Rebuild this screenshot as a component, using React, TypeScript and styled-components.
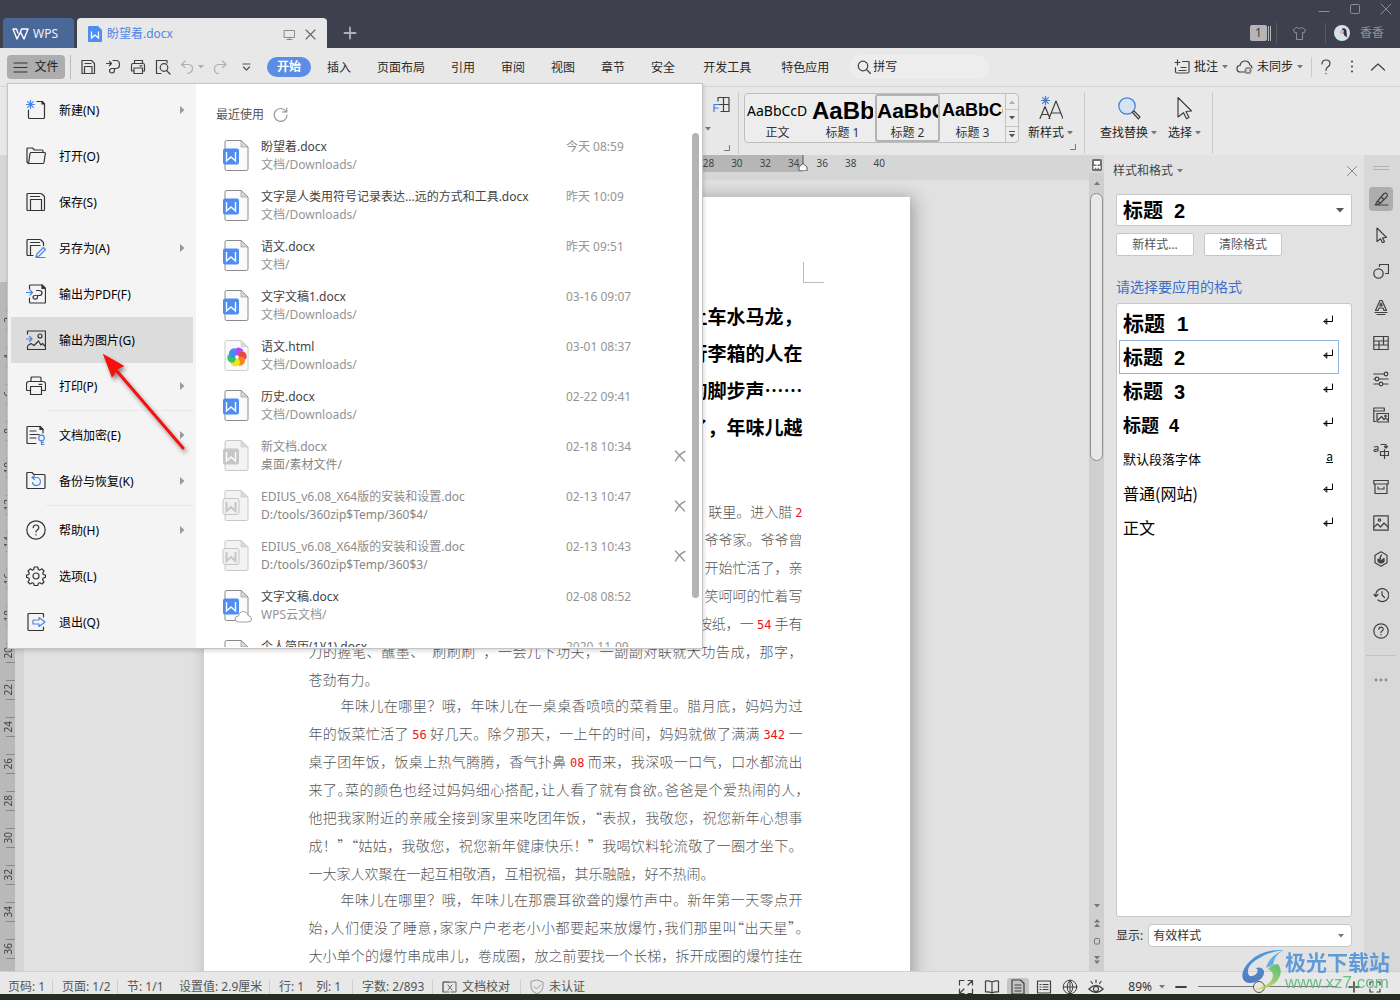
import React from 'react';
import styled, { createGlobalStyle, css } from 'styled-components';

const UI = '"Noto Sans", "Noto Sans CJK SC", sans-serif';
const CJK = '"Noto Sans CJK SC", "Noto Sans", sans-serif';
const HEADING = '"Liberation Sans", "Noto Sans CJK SC", sans-serif';

const Global = createGlobalStyle`
  * { box-sizing: border-box; }
  body { margin: 0; background: #262d22; font-family: ${UI}; font-size: 12px; line-height: 16px; color: #333; }
  button, select, input { font: inherit; color: inherit; }
  button { border: 0; padding: 0; margin: 0; background: none; cursor: pointer; }
  ul { list-style: none; margin: 0; padding: 0; }
  p, h2 { margin: 0; font-weight: inherit; font-size: inherit; }
  svg { display: block; flex: none; }
`;

/* ---------- icons ---------- */

interface IconProps {
  w?: number;
  h?: number;
  box?: string;
  color?: string;
  sw?: number;
  children: React.ReactNode;
}

const Icon = ({ w = 20, h = w, box = `0 0 ${w} ${h}`, color = '#404040', sw = 1.2, children }: IconProps) => (
  <svg width={w} height={h} viewBox={box} fill="none" stroke={color} strokeWidth={sw} strokeLinecap="round" strokeLinejoin="round" aria-hidden="true">
    {children}
  </svg>
);

const Caret = ({ color = '#777' }: { color?: string }) => (
  <svg width="6" height="4" viewBox="0 0 6 4" aria-hidden="true"><path d="M0 0h6L3 3.5z" fill={color} /></svg>
);

const BLUE = '#4a86e0';

const menuIcons: Record<string, React.ReactNode> = {
  new: <><path d="M2.500 10v7.500q0 1 1 1h14q1 0 1-1V4L16 1.500h-5" /><path d="M16 1.500V4h2.500z" fill="#333" /><path d="M4.500.5v8M.5 4.500h8M1.700 1.700l5.600 5.600M7.300 1.700L1.700 7.300" stroke={BLUE} sw={1} /></>,
  open: <><path d="M2.500 17.500L1 16V3q0-1 1-1h4.500l2 2H16q1 0 1 1v1" /><path d="M5 6.500h13.500q1 0 .8 1L18 16.500q-.2 1-1 1H3.500q-.9 0-.8-1l1.300-9q.2-1 1-1z" /></>,
  save: <><path d="M1 17.500v-15q0-1 1-1h12.500q1 0 1.500.5l2 2q.5.500.5 1.500v12q0 1-1 1H2q-1 0-1-1z" /><path d="M4.500 18V7.500h11V18M4.500 4.500h9" /></>,
  saveAs: <><path d="M7 17.500H2q-1 0-1-1v-14q0-1 1-1h11.500q1 0 1.500.5l2 2q.5.500.5 1.500v2" /><path d="M4.500 17V7.500H14M4.500 4.500h9" /><path d="M11 16l6.500-6.500 2 2L13 18l-3 .8zM10 19.500h9" stroke={BLUE} /></>,
  pdf: <><path d="M3.500 5V2q0-1 1-1H16l3.500 3.500V18q0 1-1 1h-14q-1 0-1-1v-4" /><path d="M16 1v3.500h3.500z" fill="#333" /><path d="M10.500 6.500H13q3 0 3 2.500t-3 2.500h-1.500V13q0 2.200-2.200 2.200T7 13.300q0-1.800 2.300-1.800h1" /><path d="M.5 8.500h6M4 6l2.500 2.500L4 11" stroke={BLUE} /></>,
  image: <><path d="M1.500 4V1h18v18.500H1.500v-3" /><circle cx="14" cy="6" r="2" /><path d="M2 15.500l3-2 3 2 4.500-4.500L15 15l1.500-1.500 3 3" /><path d="M.5 9h5.500M3.500 6.500L6 9l-2.500 2.500" stroke={BLUE} /></>,
  print: <><path d="M5 5.500V2q0-1 1-1h8q1 0 1 1v3.500M4 14.500H1.500q-1 0-1-1V8q0-2.500 2.500-2.500h14q2.500 0 2.500 2.500v5.500q0 1-1 1H16" /><path d="M4.500 10.500h11v8h-11zM13 8.300h3" /></>,
  encrypt: <><path d="M10 18.500H2q-1 0-1-1v-15q0-1 1-1h12L17 4.500V8" /><path d="M14 1.500v3h3z" fill="#333" /><path d="M4 6h6M4 9.500h9M4 13h6" /><circle cx="15.500" cy="13" r="2.800" stroke={BLUE} /><path d="M15.500 16v4M15.500 19.500H18M15.500 17.500h2" stroke={BLUE} /></>,
  backup: <><path d="M.8 16.500V2.500q0-1 1-1H6l2 2h10q1 0 1 1v12q0 1-1 1H1.800q-1 0-1-1z" /><path d="M8.500 4.500l-2.500 2 2.500 2M6.500 6.500h4a4 4 0 1 1-4 5" stroke={BLUE} /></>,
  help: <><circle cx="10" cy="10" r="9.200" /><path d="M7.200 7.700q.2-2.700 2.800-2.700t2.800 2.500q0 1.500-1.500 2.400T10 12M10 14.600v.4" /></>,
  options: <><path d="M8.300 1h3.400l.6 2.500 1.500.6L16 2.800 18 5l-1.300 2.100.5 1.400 2.300.6v2.300l-2.300.6-.6 1.500L18 16l-2.200 2-2-1.200-1.500.5-.6 2.200H8.300l-.6-2.200-1.500-.5-2 1.200L2 16l1.400-2.500-.6-1.500-2.300-.6V9.100l2.300-.6.5-1.400L2 5l2.200-2.200 2 1.300 1.500-.6z" /><circle cx="10" cy="10" r="3" /></>,
  exit: <><path d="M17.500 5V2.500q0-1-1-1H3q-1 0-1 1v15q0 1 1 1h13.500q1 0 1-1V15" /><path d="M7 8h6V5.500L19 10l-6 4.500V12H7z" stroke={BLUE} /></>,
};

const sideIcons: { name: string; art: React.ReactNode }[] = [
  { name: '样式和格式', art: <><path d="M2 14h13M3.500 11.500L11 2.500q2-1 3 .5t-.2 2.800L7 12.500l-4.500 1.300zM8 5.800l3 2.900M5 10l2 2" /></> },
  { name: '选择', art: <path d="M4 1l9.500 9.500-4 .3 2 4-2 1-2-4L4 14.500z" /> },
  { name: '形状', art: <><circle cx="5.500" cy="10.500" r="4.700" /><path d="M6.500 3.500V1.500h9v9H12.500" /></> },
  { name: '艺术字', art: <><path d="M2.500 11.500L7 1.500h2l4.500 10h-2.500l-1-2.500H6l-1 2.500zM6.800 6.800L8 4l1.200 2.800zM2 13.500h12M4 15.700h8" /></> },
  { name: '表格', art: <path d="M.8 1.500h14.400v13H.8zM.8 6h14.400M.8 10h14.400M6 6v8.500M10.500 1.500V10" /> },
  { name: '设置', art: <><path d="M.8 3h10M.8 8h1.500M6 8h9.200M.8 13h5.500M10 13h5" /><circle cx="13" cy="3" r="1.800" /><circle cx="4" cy="8" r="1.800" /><circle cx="8" cy="13" r="1.800" /></> },
  { name: '图库', art: <><path d="M3 14.500H.8V1h10.500v3M.8 4h10M4 14V6.500h11.500v8.500H4.500" /><path d="M5 13l3.500-3.500 2.500 3 1.500-1.500 2.500 2" /><circle cx="12.500" cy="9" r=".7" /></> },
  { name: '翻译', art: <><path d="M1.500 4q2.500-1 3.500 0v4M5 6Q1 6 1 7.500T5 8M8 1.500h5V5M11.500 3.500L13 5l1.500-1.500M7.500 8.500h8v4h-8zM11.500 6.500v9" /></> },
  { name: '归档', art: <path d="M.8 1.500h14.400V5H.8zM2 5v9.500h12V5M5 8v2h6V8" /> },
  { name: '图片', art: <><path d="M.8.8h14.400v14.400H.8z" /><circle cx="6.500" cy="5" r="1.200" /><path d="M1 12l3.500-3 3 3 3.500-4 4 4" /></> },
  { name: '限制', art: <><path d="M8 .8l6 3.400v7.600l-6 3.400-6-3.400V4.200z" /><path d="M8.500 4Q6 7 7.500 9.500M8 12q-3.500 0-3-4 2 1 3 4 .5-3.500 3-4.500.8 4.500-3 4.500z" fill="#404040" /></> },
  { name: '历史', art: <><path d="M2.800 9A6.500 6.500 0 1 1 5 13M1 7.500L2.800 9.500 5 7.500M9 4.500V8l2.500 2.500" /></> },
  { name: '帮助', art: <><circle cx="8" cy="8" r="7.200" /><path d="M5.800 6.300q.2-2.200 2.200-2.200t2.200 1.900q0 1.200-1.200 1.900T8 9.700M8 11.700v.2" /></> },
];

/* ---------- frame ---------- */

const Frame = styled.div`
  position: relative;
  height: 100vh;
  display: flex;
  flex-direction: column;
  overflow: hidden;
`;

const Divider = styled.span<{ $h?: number; $c?: string }>`
  width: 1px;
  height: ${p => p.$h ?? 20}px;
  background: ${p => p.$c ?? '#cacaca'};
  flex: none;
`;

/* ---------- title bar ---------- */

const TitleBar = styled.header`
  height: 48px;
  flex: none;
  background: #3e414d;
  display: flex;
  align-items: flex-end;
  padding-left: 3px;
  gap: 3px;
`;

const WpsTab = styled.button`
  width: 71px;
  height: 30px;
  border-radius: 4px 4px 0 0;
  background: #4a6799;
  color: #f0f2f6;
  display: flex;
  align-items: center;
  gap: 4px;
  padding: 2px 0 0 9px;
`;

const DocTab = styled.div`
  width: 250px;
  height: 30px;
  border-radius: 4px 4px 0 0;
  background: #e8e8e8;
  color: #4f86e4;
  display: flex;
  align-items: center;
  padding: 2px 10px 0 11px;
  gap: 5px;
`;

const TabName = styled.span`
  flex: 1;
`;

const TabTools = styled.span`
  display: flex;
  gap: 8px;
`;

const AddTab = styled.button`
  height: 30px;
  padding: 0 13px;
`;

const TitleRight = styled.div`
  margin-left: auto;
  align-self: stretch;
  display: flex;
  flex-direction: column;
  align-items: flex-end;
  justify-content: space-between;
  padding: 3px 8px 5px 0;
`;

const WinButtons = styled.div`
  display: flex;
  gap: 19px;
`;

const UserRow = styled.div`
  display: flex;
  align-items: center;
  color: #90929b;
  height: 20px;
  padding-right: 8px;
`;

const Badge = styled.span`
  width: 17px;
  height: 16px;
  border-radius: 2px;
  background: #b4b4b9;
  color: #4a4034;
  text-align: center;
`;

const BadgeLines = styled.span`
  width: 5px;
  height: 15px;
  margin-right: 4px;
  border-left: 1px solid #3e414d;
  background: repeating-linear-gradient(to right, #b4b4b9 0 1px, #3e414d 1px 2px);
`;

const Shirt = styled.button`
  padding: 0 18px 0 15px;
`;

const Avatar = styled.span`
  margin: 0 10px 0 8px;
`;

/* ---------- menu bar ---------- */

const MenuBar = styled.nav`
  height: 38px;
  flex: none;
  background: #e8e8e8;
  display: flex;
  align-items: center;
  padding: 0 14px 0 7px;
`;

const FileButton = styled.button`
  width: 58px;
  height: 24px;
  border-radius: 4px;
  background: #adadad;
  color: #222;
  display: flex;
  align-items: center;
  justify-content: center;
  gap: 6px;
  margin-right: 5px;
`;

const QuickTools = styled.div`
  display: flex;
  align-items: center;
  gap: 9px;
  padding: 0 11px 0 9px;
`;

const ToolButton = styled.button`
  display: flex;
  align-items: center;
  gap: 4px;
`;

const Tab = styled.button<{ $active?: boolean; $wide?: boolean }>`
  height: 20px;
  padding: 2px ${p => (p.$wide ? 15 : 13)}px 0;
  color: #2a2a2a;
  white-space: nowrap;
  ${p => p.$active && css`
    padding: 0 10px;
    margin-right: 3px;
    border-radius: 10px;
    background: #5a8ee6;
    color: #fff;
    font-weight: 700;
  `}
`;

const SearchPill = styled.label`
  width: 140px;
  height: 24px;
  border-radius: 12px;
  background: #ededed;
  display: flex;
  align-items: center;
  gap: 2px;
  padding: 0 8px;
  margin-left: 5px;
`;

const SearchInput = styled.input`
  border: 0;
  outline: 0;
  background: none;
  padding: 0;
  width: 100%;
  color: #2a2a2a;
  &::placeholder { color: #2a2a2a; opacity: 1; }
`;

const MenuRight = styled.div`
  margin-left: auto;
  display: flex;
  align-items: center;
  color: #222;
  gap: 8px;
`;

/* ---------- ribbon ---------- */

const Ribbon = styled.section`
  height: 69px;
  flex: none;
  background: #e8e8e8;
  border-top: 1px solid #d4d4d4;
  display: flex;
  padding-left: 705px;
  padding-top: 5px;
`;

const RibbonGroup = styled.div`
  height: 62px;
  display: flex;
  border-right: 1px solid #cacaca;
`;

const BorderTools = styled.div`
  width: 33px;
  padding: 4px 8px 3px 0;
  display: flex;
  flex-direction: column;
  align-items: flex-end;
  justify-content: space-between;
`;

const CaretRow = styled.span`
  align-self: flex-start;
`;

const Gallery = styled.div`
  margin: 1px 9px 0 5px;
  height: 50px;
  border: 1px solid #bdbdbd;
  border-radius: 4px;
  background: #ededed;
  display: flex;
`;

const StyleCell = styled.button<{ $active?: boolean }>`
  width: 65px;
  height: 48px;
  border: 2px solid ${p => (p.$active ? '#b4b4b4' : 'transparent')};
  border-radius: 3px;
  overflow: hidden;
  display: flex;
  flex-direction: column;
  color: #333;
`;

const Sample = styled.span<{ $size: number; $bold?: boolean }>`
  height: 29px;
  line-height: 29px;
  width: 100%;
  flex: none;
  overflow: hidden;
  white-space: nowrap;
  text-align: left;
  color: #000;
  font-size: ${p => p.$size}px;
  ${p => p.$bold && css`font-family: ${HEADING}; font-weight: 700;`}
`;

const SampleName = styled.span`
  width: 100%;
  text-align: center;
`;

const GalleryScroll = styled.div`
  width: 13px;
  border-left: 1px solid #c4c4c4;
  display: flex;
  flex-direction: column;
`;

const GalleryStep = styled.button`
  flex: 1;
  display: flex;
  align-items: center;
  justify-content: center;
  & + & { border-top: 1px solid #c4c4c4; }
`;

const BigTool = styled.button`
  display: flex;
  flex-direction: column;
  align-items: center;
  gap: 4px;
  padding-top: 4px;
  color: #222;
  white-space: nowrap;
`;

const BigLabel = styled.span`
  display: flex;
  align-items: center;
  gap: 3px;
`;

const NewStyleGroup = styled.div`
  display: flex;
  width: 48px;
  margin-right: 8px;
  align-items: flex-start;
  justify-content: space-between;
`;

const EditTools = styled.div`
  display: flex;
  gap: 11px;
  padding: 0 11px 0 15px;
  align-items: flex-start;
`;

const LauncherSlot = styled.span`
  align-self: flex-end;
  display: flex;
  justify-content: flex-end;
  padding-bottom: 4px;
  width: 3px;
`;

const Launcher = () => <Icon w={6} h={6} color="#777" sw={1}><path d="M5.500.5v5h-5" /></Icon>;

/* ---------- work area ---------- */

const Work = styled.main`
  flex: 1;
  min-height: 0;
  display: flex;
  background: #e1e1e1;
`;

const VRuler = styled.div`
  width: 24px;
  flex: none;
  overflow: hidden;
  padding-top: 146px;
  background: linear-gradient(#d6d6d6 127px, transparent 127px), linear-gradient(to right, #b9b9b9 15px, #d5d5d5 15px);
`;

const VCell = styled.div`
  width: 16px;
  height: 37px;
  display: flex;
  align-items: center;
  justify-content: center;
  font-size: 10px;
  color: #444;
  background:
    linear-gradient(#888, #888) 6px 9px / 9px 1px no-repeat,
    linear-gradient(#888, #888) 6px 28px / 9px 1px no-repeat;
`;

const VNum = styled.span`
  writing-mode: vertical-rl;
  transform: rotate(180deg);
`;

const DocArea = styled.div`
  flex: 1;
  min-width: 0;
  display: flex;
  flex-direction: column;
`;

const HRuler = styled.div`
  height: 25px;
  flex: none;
  background: #d6d6d6;
  display: flex;
  justify-content: center;
  align-items: flex-start;
`;

const HRulerInner = styled.div`
  position: relative;
  width: 706px;
  height: 17px;
  padding-left: 92px;
  background: linear-gradient(to right, #d6d6d6 105px, #b6b6b6 105px, #b6b6b6 599px, #d6d6d6 599px);
`;

const HCells = styled.div`
  width: 598px;
  display: grid;
  grid-template-columns: repeat(21, 1fr);
  font-size: 10px;
  color: #444;
  text-align: center;
`;

const Indent = styled.span`
  position: absolute;
  left: 594px;
  top: 0;
`;

const Canvas = styled.div`
  flex: 1;
  min-height: 0;
  overflow: hidden;
  display: flex;
  justify-content: center;
  padding-top: 17px;
`;

const Page = styled.article`
  width: 706px;
  height: 1000px;
  flex: none;
  background: #fff;
  box-shadow: 4px 0 16px rgba(0, 0, 0, 0.28);
  font-family: ${CJK};
`;

const PageHead = styled.div`
  height: 86px;
  display: flex;
  align-items: flex-end;
  justify-content: flex-end;
  padding-right: 86px;
`;

const CropMark = styled.span`
  width: 21px;
  height: 21px;
  border-left: 1px solid #bcbcbc;
  border-bottom: 1px solid #bcbcbc;
`;

const Headline = styled.h2`
  padding: 14px 107px 52px 105px;
  font-size: 19px;
  line-height: 37px;
  font-weight: 700;
  color: #000;
  text-align: right;
`;

const BodyText = styled.div`
  padding: 0 107px 0 105px;
  font-size: 14px;
  line-height: 28px;
  font-weight: 300;
  color: #555;
`;

const Para = styled.p`
  margin-bottom: -2px;
`;

const Line = styled.span<{ $mode?: 'end' | 'start'; $indent?: boolean; $trim?: boolean }>`
  display: block;
  height: 28px;
  white-space: nowrap;
  text-align: ${p => (p.$mode === 'end' ? 'right' : 'left')};
  ${p => !p.$mode && css`text-align: justify; text-align-last: justify;`}
  ${p => p.$indent && css`padding-left: 32px;`}
  ${p => p.$trim && css`font-feature-settings: "halt";`}
`;

const Red = styled.span`
  font-family: "DejaVu Sans Mono", monospace;
  font-size: 12px;
  line-height: 14px;
  color: #f01018;
`;

const HeadLine = styled.span`
  display: block;
`;

/* ---------- scroll bar ---------- */

const Scroll = styled.div`
  width: 15px;
  flex: none;
  background: #cfcfcf;
  display: flex;
  flex-direction: column;
  align-items: center;
`;

const ScrollHead = styled.div`
  height: 18px;
  width: 100%;
  background: #d6d6d6;
  display: flex;
  justify-content: center;
  padding-top: 4px;
`;

const ScrollArrow = styled.button`
  height: 20px;
  display: flex;
  align-items: center;
`;

const Thumb = styled.div`
  width: 13px;
  height: 268px;
  border: 1px solid #8e8e8e;
  border-radius: 7px;
  background: #e8e8e8;
`;

const ScrollFoot = styled.div`
  margin-top: auto;
  display: flex;
  flex-direction: column;
  align-items: center;
  gap: 11px;
  padding-bottom: 7px;
`;

/* ---------- style panel ---------- */

const Panel = styled.aside`
  width: 260px;
  flex: none;
  background: #e3e3e3;
  padding: 8px 12px 24px 12px;
  display: flex;
  flex-direction: column;
`;

const PanelTitle = styled.div`
  height: 16px;
  display: flex;
  align-items: center;
  gap: 4px;
  margin: 0 0 15px -3px;
  color: #444;
`;

const CloseButton = styled.button`
  margin-left: auto;
  margin-right: -6px;
`;

const SelectWrap = styled.span<{ $h: number }>`
  position: relative;
  display: block;
  flex: 1 1 auto;
  height: ${p => p.$h}px;
  max-height: ${p => p.$h}px;
`;

const Select = styled.select<{ $title?: boolean }>`
  appearance: none;
  width: 100%;
  height: 100%;
  border: 1px solid #c6c6c6;
  border-radius: ${p => (p.$title ? 2 : 4)}px;
  background: #fff;
  color: #333;
  padding: 0 4px;
  ${p => p.$title && css`
    padding: 2px 6px 0;
    color: #000;
    font: 700 20px/28px ${HEADING};
  `}
`;

const SelectCaret = styled.span`
  position: absolute;
  right: 8px;
  top: calc(50% - 2px);
  pointer-events: none;
`;

const PanelButtons = styled.div`
  display: flex;
  gap: 10px;
  margin: 7px 0 22px;
`;

const PanelButton = styled.button`
  width: 78px;
  height: 23px;
  border: 1px solid #c6c6c6;
  border-radius: 2px;
  background: #fff;
  color: #555;
`;

const PanelHint = styled.div`
  font-size: 14px;
  line-height: 18px;
  color: #3c6fc9;
  margin-bottom: 7px;
`;

const StyleList = styled.ul`
  flex: 1;
  border: 1px solid #c6c6c6;
  border-radius: 3px;
  background: #fff;
  padding: 2px 12px 0 2px;
  margin-bottom: 7px;
`;

const StyleItem = styled.button<{ $size: number; $bold?: boolean; $active?: boolean }>`
  width: 100%;
  height: 34px;
  border: 1px solid ${p => (p.$active ? '#93b3de' : 'transparent')};
  padding: 0 5px 0 3px;
  display: flex;
  align-items: center;
  justify-content: space-between;
  color: #000;
  font-size: ${p => p.$size}px;
  line-height: 28px;
  font-family: ${CJK};
  ${p => p.$bold && css`padding-top: 2px; font-weight: 700; font-family: ${HEADING};`}
`;

const Mark = styled.span`
  align-self: flex-start;
  padding-top: 4px;
`;

const CharMark = styled.span`
  align-self: flex-start;
  padding-top: 6px;
  font-size: 12px;
  text-decoration: underline;
  line-height: 14px;
`;

const ShowRow = styled.div`
  display: flex;
  align-items: center;
  gap: 5px;
`;

/* ---------- side bar ---------- */

const Side = styled.aside`
  width: 36px;
  flex: none;
  background: #d8d8d8;
  display: flex;
  flex-direction: column;
  align-items: center;
  gap: 12px;
  padding-top: 11px;
  padding-right: 2px;
`;

const SideGrip = styled.span`
  width: 16px;
  height: 4px;
  margin-bottom: 5px;
  border: solid #b4b4b4;
  border-width: 1px 0;
`;

const SideButton = styled.button<{ $active?: boolean }>`
  width: 24px;
  height: 24px;
  border-radius: 4px;
  display: flex;
  align-items: center;
  justify-content: center;
  background: ${p => (p.$active ? '#adadad' : 'transparent')};
`;

const SideRule = styled.span`
  width: 30px;
  height: 1px;
  background: #c2c2c2;
`;

/* ---------- status bar ---------- */

const Status = styled.footer`
  height: 23px;
  flex: none;
  background: #e8e8e8;
  border-top: 1px solid #d0d0d0;
  display: flex;
  align-items: center;
  padding: 7px 14px 0 8px;
  color: #555;
  white-space: nowrap;
`;

const StatusItem = styled.span<{ $w: number; $line?: boolean }>`
  width: ${p => p.$w}px;
  height: 16px;
  display: flex;
  align-items: center;
  gap: 5px;
  border-right: ${p => (p.$line ? '1px solid #d0d0d0' : '0')};
  margin-right: ${p => (p.$line ? 9 : 0)}px;
`;

const StatusRight = styled.div`
  margin-left: auto;
  display: flex;
  align-items: center;
  gap: 4px;
`;

const ViewButton = styled.button<{ $active?: boolean }>`
  width: 22px;
  height: 18px;
  border-radius: 3px;
  display: flex;
  align-items: center;
  justify-content: center;
  background: ${p => (p.$active ? '#c4c4c4' : 'transparent')};
`;

const ZoomText = styled.button`
  display: flex;
  align-items: center;
  gap: 7px;
  color: #333;
  margin: 0 6px 0 17px;
`;

const ZoomRange = styled.input`
  appearance: none;
  width: 139px;
  height: 14px;
  margin: 0 7px;
  background: linear-gradient(#777, #777) center / 100% 1px no-repeat;
  &::-webkit-slider-thumb {
    appearance: none;
    width: 12px;
    height: 12px;
    border: 1px solid #555;
    border-radius: 50%;
    background: #e8e8e8;
  }
`;

const Taskbar = styled.div`
  height: 6px;
  flex: none;
  background: #262d22;
`;

/* ---------- file menu ---------- */

const FileMenu = styled.div`
  position: absolute;
  left: 7px;
  top: 83px;
  width: 696px;
  height: 566px;
  border: 1px solid #c4c4c4;
  background: #fff;
  box-shadow: 1px 2px 4px rgba(0, 0, 0, 0.15);
  display: flex;
`;

const Commands = styled.ul`
  width: 188px;
  flex: none;
  padding: 3px;
  background: #f4f4f4;
`;

const Command = styled.button<{ $active?: boolean }>`
  width: 182px;
  height: 46px;
  padding: 0 8px 0 15px;
  display: flex;
  align-items: center;
  gap: 13px;
  color: #000;
  background: ${p => (p.$active ? '#dcdcdc' : 'transparent')};
`;

const CommandName = styled.span`
  flex: 1;
  padding-top: 2px;
  text-align: left;
`;

const CommandRule = styled.li`
  height: 3px;
  margin-left: 35px;
  background: linear-gradient(#e8e8e8, #e8e8e8) 0 1px / 100% 1px no-repeat;
`;

const Recent = styled.section`
  flex: 1;
  display: flex;
  flex-direction: column;
  overflow: hidden;
`;

const RecentHead = styled.div`
  height: 47px;
  flex: none;
  padding: 14px 0 0 20px;
  display: flex;
  align-items: center;
  gap: 9px;
  color: #555;
`;

const RecentBody = styled.div`
  flex: 1;
  min-height: 0;
  display: flex;
  padding: 0 3px 1px 26px;
`;

const RecentList = styled.ul`
  flex: 1;
  overflow: hidden;
`;

const RecentRow = styled.li`
  height: 50px;
  display: grid;
  grid-template-columns: 39px 305px 108px 1fr;
  align-items: center;
`;

const FileText = styled.a<{ $gone?: boolean }>`
  display: block;
  text-decoration: none;
  line-height: 18px;
  padding-bottom: 1px;
  white-space: nowrap;
  color: ${p => (p.$gone ? '#8c8c8c' : '#444')};
`;

const FilePath = styled.span<{ $gone?: boolean }>`
  display: block;
  color: ${p => (p.$gone ? '#868686' : '#959595')};
`;

const FileTime = styled.time`
  color: #959595;
  line-height: 18px;
  padding-bottom: 19px;
  white-space: nowrap;
`;

const RecentThumb = styled.div`
  width: 7px;
  height: 465px;
  margin-top: 2px;
  border-radius: 4px;
  background: #b4b4b6;
`;

/* ---------- overlays ---------- */

const Pointer = styled.svg`
  position: absolute;
  left: 96px;
  top: 346px;
  filter: drop-shadow(2px 3px 2px rgba(0, 0, 0, 0.45));
  pointer-events: none;
`;

const Watermark = styled.div`
  position: absolute;
  right: 10px;
  bottom: 7px;
  display: flex;
  opacity: 0.85;
  pointer-events: none;
`;

const MarkText = styled.div`
  font-family: ${CJK};
  font-weight: 700;
  color: #4b8fd6;
  font-size: 21px;
  line-height: 24px;
  padding-bottom: 1px;
  white-space: nowrap;
`;

const MarkUrl = styled.div`
  font-family: "Liberation Sans", Arial, sans-serif;
  font-size: 17px;
  line-height: 18px;
  color: #52b877;
`;

/* ---------- data ---------- */

const tabs = ['插入', '页面布局', '引用', '审阅', '视图', '章节', '安全', '开发工具', '特色应用'];

const commands: { icon?: string; name?: string; sub?: boolean; active?: boolean }[] = [
  { icon: 'new', name: '新建(N)', sub: true },
  { icon: 'open', name: '打开(O)' },
  { icon: 'save', name: '保存(S)' },
  { icon: 'saveAs', name: '另存为(A)', sub: true },
  { icon: 'pdf', name: '输出为PDF(F)' },
  { icon: 'image', name: '输出为图片(G)', active: true },
  { icon: 'print', name: '打印(P)', sub: true },
  {},
  { icon: 'encrypt', name: '文档加密(E)', sub: true },
  { icon: 'backup', name: '备份与恢复(K)', sub: true },
  {},
  { icon: 'help', name: '帮助(H)', sub: true },
  { icon: 'options', name: '选项(L)' },
  { icon: 'exit', name: '退出(Q)' },
];

type Kind = 'word' | 'html' | 'gone' | 'goneDoc' | 'cloud';

const recents: { name: string; path: string; time: string; kind: Kind }[] = [
  { name: '盼望着.docx', path: '文档/Downloads/', time: '今天 08:59', kind: 'word' },
  { name: '文字是人类用符号记录表达...远的方式和工具.docx', path: '文档/Downloads/', time: '昨天 10:09', kind: 'word' },
  { name: '语文.docx', path: '文档/', time: '昨天 09:51', kind: 'word' },
  { name: '文字文稿1.docx', path: '文档/Downloads/', time: '03-16 09:07', kind: 'word' },
  { name: '语文.html', path: '文档/Downloads/', time: '03-01 08:37', kind: 'html' },
  { name: '历史.docx', path: '文档/Downloads/', time: '02-22 09:41', kind: 'word' },
  { name: '新文档.docx', path: '桌面/素材文件/', time: '02-18 10:34', kind: 'gone' },
  { name: 'EDIUS_v6.08_X64版的安装和设置.doc', path: 'D:/tools/360zip$Temp/360$4/', time: '02-13 10:47', kind: 'goneDoc' },
  { name: 'EDIUS_v6.08_X64版的安装和设置.doc', path: 'D:/tools/360zip$Temp/360$3/', time: '02-13 10:43', kind: 'goneDoc' },
  { name: '文字文稿.docx', path: 'WPS云文档/', time: '02-08 08:52', kind: 'cloud' },
  { name: '个人简历(1)(1).docx', path: '', time: '2020-11-09', kind: 'word' },
];

const styleItems = [
  { name: '标题\u00a0 1', size: 21, bold: true },
  { name: '标题\u00a0 2', size: 20, bold: true, active: true },
  { name: '标题\u00a0 3', size: 20, bold: true },
  { name: '标题\u00a0 4', size: 18, bold: true },
  { name: '默认段落字体', size: 13, char: true },
  { name: '普通(网站)', size: 16 },
  { name: '正文', size: 16 },
];

const PETALS = ['#b14df0', '#e8473f', '#f7861e', '#f6e21c', '#35c46a', '#3f8ef5'];

const FileIcon = ({ kind }: { kind: Kind }) => {
  const gone = kind === 'gone' || kind === 'goneDoc';
  const edge = gone ? '#c8c8c8' : kind === 'html' ? '#c8ccd2' : '#8a8a8a';
  const tile = kind === 'gone' ? '#c6c6c6' : kind === 'goneDoc' ? '#f0f0f0' : '#4f8cf0';
  return (
    <svg width="30" height="34" viewBox="0 1 30 34" fill="none" aria-hidden="true">
      <path d="M4.500 2.500H19L26 9v22q0 1.500-1.500 1.500h-20q-1.500 0-1.500-1.500V4q0-1.500 1.500-1.500z" fill={gone ? '#f3f3f3' : '#fbfbfb'} stroke={edge} />
      <path d="M19 2.500V9h7z" fill="#dadada" stroke={edge} strokeWidth=".6" />
      {kind === 'html' ? (
        <g>
          {PETALS.map((c, i) => (
            <path key={c} d="M15 19L12 14.500Q12 10 16.500 9.500q4.500.5 5 4-3-1-6.500 5.500z" fill={c} transform={`rotate(${i * 60} 15 19)`} />
          ))}
          <circle cx="15" cy="19" r="1.800" fill="#fff" />
        </g>
      ) : (
        <g>
          <rect x="1" y="10.500" width="16" height="16" rx="2" fill={tile} stroke={kind === 'goneDoc' ? '#c6c6c6' : 'none'} />
          <path d="M4.500 14v9l4.500-4 4.500 4v-9" stroke={kind === 'goneDoc' ? '#c6c6c6' : '#fff'} strokeWidth={kind === 'goneDoc' ? 2 : 1.4} />
        </g>
      )}
      {kind === 'cloud' && <path d="M16.500 34q-3.500 0-3.500-3t3.500-3q1-4.500 5-4.500t4.500 4q3.500.5 3.500 3.500t-3.500 3z" fill="#fff" stroke="#a0a0a0" />}
    </svg>
  );
};

const DocBody = () => (
  <BodyText>
    <Para>
      <Line $mode="end">联里。进入腊 <Red>2</Red></Line>
      <Line $mode="end">爷爷家。爷爷曾</Line>
      <Line $mode="end">开始忙活了，亲</Line>
      <Line $mode="end">笑呵呵的忙着写</Line>
      <Line $mode="end">按纸，一 <Red>54</Red> 手有</Line>
      <Line>力的握笔、蘸墨、“刷刷刷”，一会儿下功夫，一副副对联就大功告成，那字，</Line>
      <Line $mode="start">苍劲有力。</Line>
    </Para>
    <Para>
      <Line $indent>年味儿在哪里？哦，年味儿在一桌桌香喷喷的菜肴里。腊月底，妈妈为过</Line>
      <Line>年的饭菜忙活了 <Red>56</Red> 好几天。除夕那天，一上午的时间，妈妈就做了满满 <Red>342</Red> 一</Line>
      <Line>桌子团年饭，饭桌上热气腾腾，香气扑鼻 <Red>08</Red> 而来，我深吸一口气，口水都流出</Line>
      <Line $trim>来了。菜的颜色也经过妈妈细心搭配，让人看了就有食欲。爸爸是个爱热闹的人，</Line>
      <Line>他把我家附近的亲戚全接到家里来吃团年饭，“表叔，我敬您，祝您新年心想事</Line>
      <Line>成！”“姑姑，我敬您，祝您新年健康快乐！”我喝饮料轮流敬了一圈才坐下。</Line>
      <Line $mode="start">一大家人欢聚在一起互相敬酒，互相祝福，其乐融融，好不热闹。</Line>
    </Para>
    <Para>
      <Line $indent>年味儿在哪里？哦，年味儿在那震耳欲聋的爆竹声中。新年第一天零点开</Line>
      <Line $trim>始，人们便没了睡意，家家户户老老小小都要起来放爆竹，我们那里叫“出天星”。</Line>
      <Line>大小单个的爆竹串成串儿，卷成圈，放之前要找一个长梯，拆开成圈的爆竹挂在</Line>
    </Para>
  </BodyText>
);

export default function App() {
  return (
    <Frame>
      <Global />
      <TitleBar>
        <WpsTab>
          <Icon w={17} h={14} color="#fff" sw={1.4}><path d="M6 6L4.500 2H1l4 10 3.500-7L12 12l4-10H9.500l-1 3" /></Icon>
          WPS
        </WpsTab>
        <DocTab>
          <svg width="14" height="16" viewBox="0 0 14 16" aria-hidden="true"><path d="M1 0h9l4 4v11q0 1-1 1H1q-1 0-1-1V1q0-1 1-1z" fill="#4f8cf0" /><path d="M3.500 5.500v6.500L7 9l3.500 3V5.500" fill="none" stroke="#fff" strokeWidth="1.300" /></svg>
          <TabName>盼望着.docx</TabName>
          <TabTools>
            <Icon w={13} h={13} color="#8a8a8a" sw={1}><path d="M1.500 2.500h10v7h-10zM6.500 9.500v2M4 11.500h5" /></Icon>
            <Icon w={13} h={13} color="#666" sw={1.1}><path d="M2 2l9 9M11 2l-9 9" /></Icon>
          </TabTools>
        </DocTab>
        <AddTab aria-label="新建标签"><Icon w={14} h={14} color="#b0b1b7" sw={1.8}><path d="M7 1.500v11M1.500 7h11" /></Icon></AddTab>
        <TitleRight>
          <WinButtons>
            <button aria-label="最小化"><Icon w={12} h={12} color="#8b8d97" sw={1}><path d="M1 8.500h10" /></Icon></button>
            <button aria-label="最大化"><Icon w={12} h={12} color="#8b8d97" sw={1}><rect x="1.500" y="1.500" width="9" height="9" rx="1" /></Icon></button>
            <button aria-label="关闭"><Icon w={12} h={12} color="#8b8d97" sw={1}><path d="M1 1l10 10M11 1L1 11" /></Icon></button>
          </WinButtons>
          <UserRow>
            <Badge>1</Badge><BadgeLines />
            <Divider $c="#595c67" />
            <Shirt aria-label="皮肤"><Icon w={15} h={15} color="#8b8d97" sw={1}><path d="M5 1.500q2.500 2.500 5 0l3.500 2.500-1.500 3-1.500-.5v7h-6v-7L3 7 1.500 4z" /></Icon></Shirt>
            <Divider $c="#595c67" />
            <Avatar>
              <svg width="16" height="16" viewBox="0 0 16 16" aria-hidden="true"><circle cx="8" cy="8" r="8" fill="#d5e2e8" /><path d="M8 3.500q4-1 4.500 2.500l.5 6.500-2.500-2L8.500 7z" fill="#33303a" /><path d="M6 7q1.500-3.500 4-1.500l-.5 3L6.500 9z" fill="#dcaeb0" /></svg>
            </Avatar>
            香香
          </UserRow>
        </TitleRight>
      </TitleBar>

      <MenuBar>
        <FileButton><Icon w={15} h={13} color="#333" sw={1.2}><path d="M1 2h13M1 6.500h13M1 11h13" /></Icon>文件</FileButton>
        <Divider $h={24} $c="#bdbdbd" />
        <QuickTools>
          <ToolButton aria-label="保存"><Icon w={16}><path d="M2 14.500v-13h9.500l3 3v10zM4.500 14V7.500h7.500V14M5 4.500h6" /></Icon></ToolButton>
          <ToolButton aria-label="输出为PDF"><Icon w={16}><path d="M1.500 4.500h5M4.500 2.500l2 2-2 2M8 1.500h3q3.500 0 3.500 4T11 9.500H9.500V11q0 3-2.500 3t-2.500-2.300Q4.500 9.500 7 9.500h2.500" /></Icon></ToolButton>
          <ToolButton aria-label="打印"><Icon w={16}><path d="M4.500 4.500v-3h8v3M4 12H1.500V6q0-1.500 1.500-1.500h10q1.500 0 1.500 1.500v6H12.500M4 9h8.500v5.500H4zM10 6.800h2" /></Icon></ToolButton>
          <ToolButton aria-label="打印预览"><Icon w={16}><path d="M6 14.500H1.500v-13H12V4M11.500 11.500l3.500 3.500" /><circle cx="9" cy="8.500" r="3.800" /></Icon></ToolButton>
          <ToolButton aria-label="撤销"><Icon w={14} h={16} color="#b0b0b0"><path d="M5 2L1.500 5.500 5 8.500M2 5.500h6q4.500 0 4.500 4t-5 5" /></Icon><Caret color="#b0b0b0" /></ToolButton>
          <ToolButton aria-label="恢复"><Icon w={14} h={16} color="#b0b0b0"><path d="M9.500 2L13 5.500 9.500 8.500M12.500 5.500h-6q-5 0-5 4.500t4 4.500" /></Icon></ToolButton>
          <ToolButton aria-label="更多"><Icon w={20} h={10} color="#555"><path d="M7 2h7M7.500 5l3 3 3-3" /></Icon></ToolButton>
        </QuickTools>
        <Tab $active>开始</Tab>
        {tabs.map((t, i) => <Tab key={t} $wide={i > 6}>{t}</Tab>)}
        <SearchPill>
          <Icon w={14} h={14} color="#444"><circle cx="6" cy="6" r="4.800" /><path d="M9.500 9.500l4 4" /></Icon>
          <SearchInput placeholder="拼写" aria-label="查找命令" />
        </SearchPill>
        <MenuRight>
          <ToolButton><Icon w={16}><path d="M1 3.500h5M3.500 1v5M8.500 2.500h6.500v10q0 1.500-1.500 1.500H3q-1.500 0-1.500-1.500V8.500M7 8.500h5M5 11.500h7" /></Icon>批注<Caret /></ToolButton>
          <ToolButton><Icon w={17} h={16}><path d="M9 13H4.500Q1 13 1 9.700T4 6.500Q5 2 9 2t5 4q2 .8 2 3" /><circle cx="12" cy="11.500" r="3" fill="#888" stroke="#888" /><path d="M11 10.500l2 2M13 10.500l-2 2" stroke="#eee" /></Icon>未同步<Caret /></ToolButton>
          <Divider />
          <ToolButton aria-label="帮助"><Icon w={14} h={16}><path d="M2 5q0-4 4-4t4 3.500q0 2-2 3.300T6 11.500M6 14.300v.3" /></Icon></ToolButton>
          <ToolButton aria-label="更多选项"><Icon w={20} h={16} sw={2}><path d="M10 2.500v.1M10 7.500v.1M10 12.500v.1" /></Icon></ToolButton>
          <ToolButton aria-label="折叠功能区"><Icon w={16} h={12}><path d="M1.500 9L8 3l6.500 6" /></Icon></ToolButton>
        </MenuRight>
      </MenuBar>

      <Ribbon>
        <RibbonGroup>
          <BorderTools>
            <Icon w={17} h={17}><path d="M5 5V1.500h11v14H8M5 8.500h11M10.500 1.500v14" /><path d="M1 15.500v-7h5M1 12h4" stroke="#3d7ed8" /></Icon>
            <CaretRow><Caret /></CaretRow>
            <Launcher />
          </BorderTools>
        </RibbonGroup>
        <RibbonGroup>
          <Gallery>
            <StyleCell><Sample $size={14}>AaBbCcD</Sample><SampleName>正文</SampleName></StyleCell>
            <StyleCell><Sample $size={24} $bold>AaBb</Sample><SampleName>标题 1</SampleName></StyleCell>
            <StyleCell $active><Sample $size={21} $bold>AaBbC</Sample><SampleName>标题 2</SampleName></StyleCell>
            <StyleCell><Sample $size={18} $bold>AaBbCc</Sample><SampleName>标题 3</SampleName></StyleCell>
            <GalleryScroll>
              <GalleryStep aria-label="上一行"><svg width="6" height="4"><path d="M0 4h6L3 .5z" fill="#b0b0b0" /></svg></GalleryStep>
              <GalleryStep aria-label="下一行"><Caret color="#555" /></GalleryStep>
              <GalleryStep aria-label="展开"><svg width="6" height="7"><path d="M0 0h6v1H0zM0 3h6L3 6.500z" fill="#555" /></svg></GalleryStep>
            </GalleryScroll>
          </Gallery>
          <NewStyleGroup>
            <BigTool>
              <Icon w={24} h={25}><path d="M1 22.500l5-12 5 12M3 18.500h6M10 22.500L17 5l7 17.500M12.500 17h9" /><path d="M6.500.5v8M2.500 4.500h8M3.700 1.700l5.600 5.600M9.300 1.700L3.700 7.300" stroke="#3d7ed8" /></Icon>
              <BigLabel>新样式<Caret /></BigLabel>
            </BigTool>
            <LauncherSlot><Launcher /></LauncherSlot>
          </NewStyleGroup>
        </RibbonGroup>
        <RibbonGroup>
          <EditTools>
            <BigTool>
              <Icon w={24} h={25}><circle cx="10" cy="10" r="8.200" fill="#d6e2f1" stroke="#3d7ed8" /><path d="M15.500 16.500l1.500-1.500 6 6-1.500 2z" /></Icon>
              <BigLabel>查找替换<Caret /></BigLabel>
            </BigTool>
            <BigTool>
              <Icon w={18} h={25}><path d="M2 1.500L15.500 15l-5.500.5 3 6-2.500 1.200-3-6-5.500 4.300z" /></Icon>
              <BigLabel>选择<Caret /></BigLabel>
            </BigTool>
          </EditTools>
        </RibbonGroup>
      </Ribbon>

      <Work>
        <VRuler>
          {Array.from({ length: 18 }, (_, i) => <VCell key={i}><VNum>{(i + 1) * 2}</VNum></VCell>)}
        </VRuler>
        <DocArea>
          <HRuler>
            <HRulerInner>
              <HCells>{Array.from({ length: 21 }, (_, i) => <span key={i}>{i < 14 ? '' : i * 2}</span>)}</HCells>
              <Indent><Icon w={10} h={16} color="#555" sw={1}><path d="M5 0v9" /><path d="M1 15.500V12l4-3.500L9 12v3.500z" fill="#fff" /></Icon></Indent>
            </HRulerInner>
          </HRuler>
          <Canvas>
            <Page>
              <PageHead><CropMark /></PageHead>
              <Headline>
                <HeadLine>上车水马龙，</HeadLine>
                <HeadLine>行李箱的人在</HeadLine>
                <HeadLine>的脚步声⋯⋯</HeadLine>
                <HeadLine>了，年味儿越</HeadLine>
              </Headline>
              <DocBody />
            </Page>
          </Canvas>
        </DocArea>
        <Scroll>
          <ScrollHead><svg width="10" height="12" viewBox="0 0 10 12" aria-hidden="true"><rect width="10" height="12" rx="1.500" fill="#6f6f6f" /><path d="M2 2h6v3.500H5.500V7H8.500v3H7V8.800H5.700V10H4.300V8.800H3V10H1.500V7h3V5.500H2z" fill="#fff" /></svg></ScrollHead>
          <ScrollArrow aria-label="向上滚动"><svg width="6" height="4"><path d="M0 4h6L3 .5z" fill="#777" /></svg></ScrollArrow>
          <Thumb />
          <ScrollFoot>
            <Caret />
            <svg width="6" height="8"><path d="M0 3.500h6L3 0zM0 8h6L3 4.500z" fill="#777" /></svg>
            <Icon w={6} h={7} color="#777" sw={1}><rect x=".5" y=".5" width="5" height="5.500" rx="1" /></Icon>
            <svg width="6" height="8"><path d="M0 0h6L3 3.500zM0 4.500h6L3 8z" fill="#777" /></svg>
          </ScrollFoot>
        </Scroll>

        <Panel>
          <PanelTitle>样式和格式<Caret /><CloseButton aria-label="关闭面板"><Icon w={12} h={12} color="#888" sw={1}><path d="M1.500 1.500l9 9M10.500 1.500l-9 9" /></Icon></CloseButton></PanelTitle>
          <SelectWrap $h={32}>
            <Select $title aria-label="当前样式" defaultValue="h2"><option value="h2">{'标题\u00a0\u00a02'}</option></Select>
            <SelectCaret><svg width="8" height="5"><path d="M0 0h8L4 4.500z" fill="#555" /></svg></SelectCaret>
          </SelectWrap>
          <PanelButtons><PanelButton>新样式...</PanelButton><PanelButton>清除格式</PanelButton></PanelButtons>
          <PanelHint>请选择要应用的格式</PanelHint>
          <StyleList>
            {styleItems.map(s => (
              <li key={s.name}>
                <StyleItem $size={s.size} $bold={s.bold} $active={s.active}>
                  {s.name}
                  {s.char ? <CharMark>a</CharMark> : <Mark><Icon w={10} h={16} color="#000" sw={1}><path d="M9.500 3v5.500H1M3.500 6L1 8.500 3.500 11z" /></Icon></Mark>}
                </StyleItem>
              </li>
            ))}
          </StyleList>
          <ShowRow>
            <label htmlFor="show">显示:</label>
            <SelectWrap $h={23}>
              <Select id="show" defaultValue="有效样式"><option>有效样式</option></Select>
              <SelectCaret><Caret /></SelectCaret>
            </SelectWrap>
          </ShowRow>
        </Panel>

        <Side>
          <SideGrip />
          {sideIcons.map((s, i) => (
            <SideButton key={s.name} aria-label={s.name} $active={i === 0}><Icon w={16}>{s.art}</Icon></SideButton>
          ))}
          <SideRule />
          <SideButton aria-label="更多"><Icon w={16} color="#888"><circle cx="3" cy="8" r=".8" /><circle cx="8" cy="8" r=".8" /><circle cx="13" cy="8" r=".8" /></Icon></SideButton>
        </Side>
      </Work>

      <Status>
        <StatusItem $w={45} $line>页码: 1</StatusItem>
        <StatusItem $w={56} $line>页面: 1/2</StatusItem>
        <StatusItem $w={52}>节: 1/1</StatusItem>
        <StatusItem $w={91} $line>设置值: 2.9厘米</StatusItem>
        <StatusItem $w={37}>行: 1</StatusItem>
        <StatusItem $w={37} $line>列: 1</StatusItem>
        <StatusItem $w={71} $line>字数: 2/893</StatusItem>
        <StatusItem $w={79} $line><Icon w={15} h={14} color="#666" sw={1}><path d="M7 2H1v10h6M1 12V2h6l.5 1 .5-1h6v10H9M6 5l4 5M10 5l-4 5" /></Icon>文档校对</StatusItem>
        <StatusItem $w={60}><Icon w={14} h={16} color="#999" sw={1}><path d="M7 1l6 2v5q0 4.500-6 7-6-2.500-6-7V3zM4 7.500l2.500 2.500L10.500 6" /></Icon>未认证</StatusItem>
        <StatusRight>
          <ViewButton aria-label="全屏"><Icon w={16}><path d="M6 1.500H1.500V6M10 14.500h4.500V10M10 1.500h4.500V6M6 14.500H1.500V10M2 14l4-4M14 2l-4 4" /></Icon></ViewButton>
          <ViewButton aria-label="阅读版式"><Icon w={16}><path d="M8 3v11M8 3Q5 1.500 1.500 2v11Q5 12.500 8 14q3-1.500 6.500-1V2Q11 1.500 8 3z" /></Icon></ViewButton>
          <ViewButton aria-label="页面视图" $active><Icon w={16}><path d="M2 1h8.500L14 4.500V15H2zM5 6h6M5 9h6M5 12h6" /></Icon></ViewButton>
          <ViewButton aria-label="大纲"><Icon w={16}><path d="M1.500 2h13v12h-13zM4 5.500h1M7 5.500h5M4 8h1M7 8h5M4 10.500h1M7 10.500h5" /></Icon></ViewButton>
          <ViewButton aria-label="Web版式"><Icon w={16} sw={1}><circle cx="8" cy="8" r="6.800" /><path d="M1.500 8h13M8 1.200v13.600M8 1.200q-6 6.800 0 13.600M8 1.200q6 6.800 0 13.600" /></Icon></ViewButton>
          <ViewButton aria-label="护眼模式"><Icon w={16}><path d="M.8 10Q8 3 15.200 10 8 17 .8 10zM8 1v2.500M3 2.500l1.500 2M13 2.500l-1.500 2" /><circle cx="8" cy="10" r="2.500" /></Icon></ViewButton>
          <ZoomText>89%<Caret /></ZoomText>
          <button aria-label="缩小"><Icon w={12} h={12} sw={1.8}><path d="M1 6h10" /></Icon></button>
          <ZoomRange type="range" min={0} max={200} defaultValue={86} aria-label="显示比例" />
          <button aria-label="放大"><Icon w={12} h={12} sw={1.6}><path d="M1 6h10M6 1v10" /></Icon></button>
          <ViewButton aria-label="适应窗口"><Icon w={12} h={12}><path d="M4 1H1v3M8 1h3v3M4 11H1V8M8 11h3V8M6 5.900v.2" /></Icon></ViewButton>
        </StatusRight>
      </Status>
      <Taskbar />

      <FileMenu>
        <Commands>
          {commands.map((c, i) => c.name ? (
            <li key={c.name}>
              <Command $active={c.active}>
                <Icon w={20} color="#333" sw={1.2}>{menuIcons[c.icon!]}</Icon>
                <CommandName>{c.name}</CommandName>
                {c.sub && <svg width="5" height="8" aria-hidden="true"><path d="M0 0l4.500 4L0 8z" fill="#999" /></svg>}
              </Command>
            </li>
          ) : <CommandRule key={i} />)}
        </Commands>
        <Recent>
          <RecentHead>最近使用<button aria-label="刷新"><Icon w={15} h={15} color="#8c909a" sw={1.1}><path d="M13 4.500A6.400 6.400 0 1 0 14 8M13.800 1v4H9.500" /></Icon></button></RecentHead>
          <RecentBody>
            <RecentList>
              {recents.map((r, i) => {
                const gone = r.kind === 'gone' || r.kind === 'goneDoc';
                return (
                  <RecentRow key={i}>
                    <FileIcon kind={r.kind} />
                    <FileText href="#" $gone={gone}>{r.name}<FilePath $gone={gone}>{r.path || '\u00a0'}</FilePath></FileText>
                    <FileTime>{r.time}</FileTime>
                    {gone && <button aria-label="移除"><Icon w={12} h={12} color="#999" sw={1.4}><path d="M1.500 1l9 10M11 1.500Q5 4 1.500 11" /></Icon></button>}
                  </RecentRow>
                );
              })}
            </RecentList>
            <RecentThumb />
          </RecentBody>
        </Recent>
      </FileMenu>

      <Pointer width="96" height="112" viewBox="0 0 96 112" aria-hidden="true">
        <path d="M20 24L87 102" stroke="#f8100c" strokeWidth="3" strokeLinecap="round" />
        <path d="M7 8l21 12-6.500 3-4.500 8z" fill="#f8100c" />
        <path d="M7 8l9 24 3.500-7.500L28 20z" fill="#f8100c" />
      </Pointer>

      <Watermark>
        <svg width="44" height="44" viewBox="0 0 44 44" aria-hidden="true">
          <defs>
            <linearGradient id="swirl" x1="0" y1="0" x2="0" y2="1"><stop offset="0" stopColor="#2f93e0" /><stop offset="1" stopColor="#3a68b8" /></linearGradient>
            <linearGradient id="leaf" x1="1" y1="0" x2="0" y2="1"><stop offset="0" stopColor="#3fb56b" /><stop offset="1" stopColor="#e3e04a" /></linearGradient>
          </defs>
          <path d="M43 1Q21 0 9 12-1 22 2 30q3 6 13 3 9-4 8-11-2-5-8-3 4 3-1 7-6 3-7-2-1-7 8-13Q26 3 43 1z" fill="url(#swirl)" />
          <path d="M37 15q6 8-1 17-8 9-25 9 14-3 19-9 5-8-3-12 4-5 10-5z" fill="url(#leaf)" />
          <path d="M43 1Q28 7 25 19l7-3Q33 6 43 1z" fill="#49a7ea" />
        </svg>
        <div>
          <MarkText>极光下载站</MarkText>
          <MarkUrl>www.xz7.com</MarkUrl>
        </div>
      </Watermark>
    </Frame>
  );
}
